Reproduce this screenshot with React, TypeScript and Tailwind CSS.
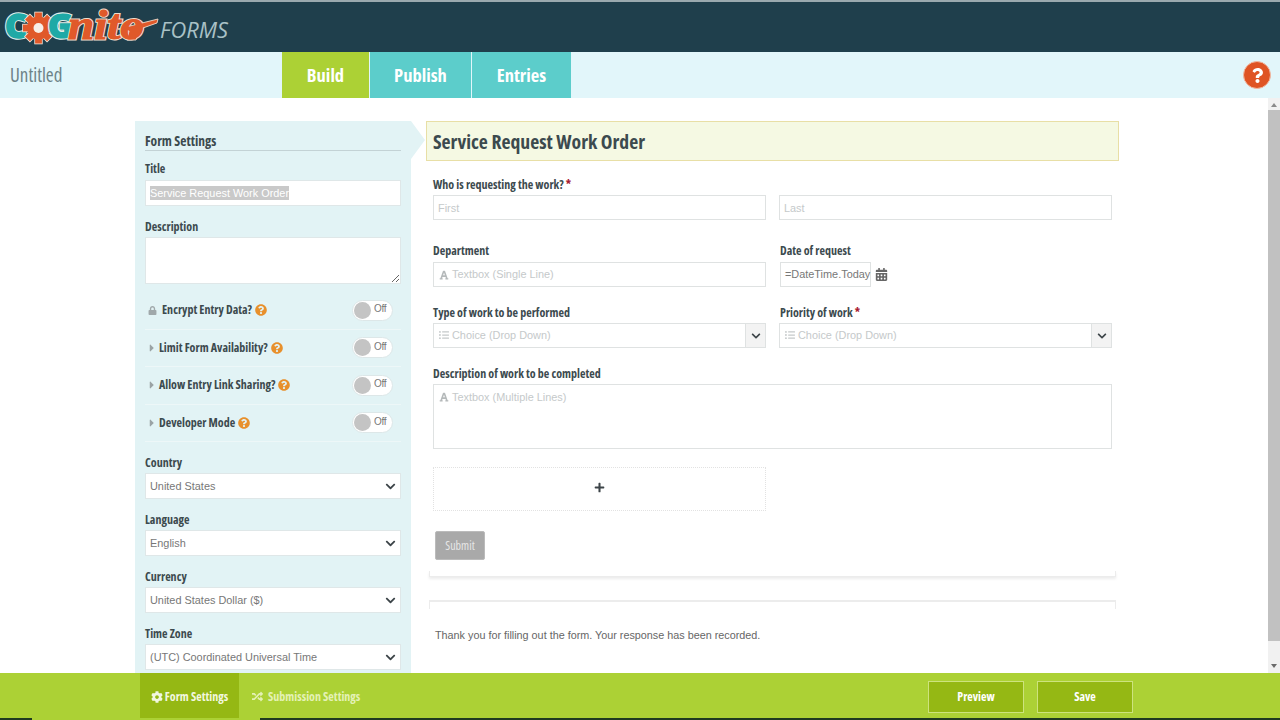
import React from "react";
import { FaCog, FaRandom, FaCalendarAlt, FaChevronDown, FaListUl, FaFont, FaPlus, FaLock, FaQuestionCircle, FaCaretRight, FaQuestion } from "react-icons/fa";

const cond = "font-['Open_Sans',sans-serif] [font-stretch:75%] font-bold";

function Logo() {
  const letter = { fontFamily: "'Open Sans',sans-serif", fontWeight: 800, fontSize: 34 };
  const nito = { fontFamily: "'Liberation Serif',serif", fontWeight: 700, fontStyle: "italic" as const, fontSize: 42 };
  return (
    <svg width="232" height="50" viewBox="0 0 232 50" className="block">
      <text x="5" y="36" {...letter} fill="#1fa9a6" stroke="#dfeeea" strokeWidth="3.4" paintOrder="stroke">C</text>
      <text x="5" y="36" {...letter} fill="#1fa9a6" stroke="#1fa9a6" strokeWidth="1.4">C</text>
      <g transform="translate(38.5 26)" stroke="#f3e6da" strokeWidth="1.6">
        {[0, 45, 90, 135].map((a) => (
          <rect key={a} x="-3.4" y="-15.5" width="6.8" height="31" fill="#e0592a" transform={`rotate(${a})`} />
        ))}
      </g>
      <g transform="translate(38.5 26)">
        {[0, 45, 90, 135].map((a) => (
          <rect key={a} x="-3.4" y="-15.5" width="6.8" height="31" fill="#e0592a" transform={`rotate(${a})`} />
        ))}
        <circle r="11.5" fill="#e0592a" />
        <circle r="5" fill="#f7efe8" />
      </g>
      <text x="48" y="36" {...letter} fill="#1fa9a6" stroke="#dfeeea" strokeWidth="3.4" paintOrder="stroke">G</text>
      <text x="48" y="36" {...letter} fill="#1fa9a6" stroke="#1fa9a6" strokeWidth="1.2">G</text>
      <text x="68" y="37" {...nito} fill="#e0592a" stroke="#efdccc" strokeWidth="3" paintOrder="stroke" textLength="76" lengthAdjust="spacingAndGlyphs">nito</text>
      <path d="M118 27 L158 17 L157 21 L140 27 L136 38 L127 38 L129 29 Z" fill="#e0592a" stroke="#efdccc" strokeWidth="0.9" />
      <text x="68" y="37" {...nito} fill="#e0592a" stroke="#e0592a" strokeWidth="1" textLength="76" lengthAdjust="spacingAndGlyphs">nito</text>
      <text x="160" y="36" fontFamily="'Open Sans',sans-serif" fontStyle="italic" fontSize="22" fill="#a9c1c6" textLength="68" lengthAdjust="spacingAndGlyphs">FORMS</text>
    </svg>
  );
}

function Help() {
  return <FaQuestionCircle className="text-[#e8902c] text-[12px] shrink-0" />;
}

function Toggle() {
  return (
    <div className="w-[41px] h-[21px] rounded-full bg-white border border-[#dde7e8] flex items-center pl-[1px] shrink-0">
      <span className="w-[17px] h-[17px] rounded-full bg-[#c4c4c4]" />
      <span className="ml-[3px] -mt-[3px] text-[10px] text-[#777] tracking-[-0.3px]">Off</span>
    </div>
  );
}

function Row({ icon, text }: { icon: React.ReactNode; text: string }) {
  return (
    <div className="h-[37.5px] flex items-center border-b border-[#edf7f8] pr-[8px]">
      {icon}
      <span className={`${cond} text-[12px] text-[#3c4a4e] mr-[3px] whitespace-nowrap`}>{text}</span>
      <Help />
      <span className="flex-1" />
      <Toggle />
    </div>
  );
}

function SideSelect({ label, value }: { label: string; value: string }) {
  return (
    <div className="mt-[11px]">
      <div className={`${cond} text-[12px] text-[#3c4a4e] h-[19px] leading-[19px]`}>{label}</div>
      <div className="h-[26px] mt-[1px] bg-white border border-[#dfe7e8] flex items-center pl-[4px] pr-[4px] text-[10.9px] text-[#777]">
        <span className="flex-1 whitespace-nowrap">{value}</span>
        <FaChevronDown className="text-[11px] text-[#3c4448]" />
      </div>
    </div>
  );
}

function Label({ children, inset }: { children: React.ReactNode; inset?: boolean }) {
  return <div className={`${cond} text-[12px] leading-[17px] text-[#3c4a4e] whitespace-nowrap ${inset ? "pl-[1px]" : ""}`}>{children}</div>;
}

const ph = "text-[10.9px] text-[#c5c9ca] whitespace-nowrap";
const box = "bg-white border border-[#dfe2e2] h-[25px] flex items-center";

function Req() {
  return <span className="text-[#a8192e]"> *</span>;
}

function Choice() {
  return (
    <div className={`${box} w-full`}>
      <span className={`${ph} flex-1 flex items-center pl-[5px]`}>
        <FaListUl className="text-[10px] mr-[3px]" />Choice (Drop Down)
      </span>
      <span className="w-[20px] h-full bg-[#f3f3f3] border-l border-[#dfe2e2] flex items-center justify-center">
        <FaChevronDown className="text-[10px] text-[#3c4448]" />
      </span>
    </div>
  );
}

export default function App() {
  return (
    <div className="w-[1280px] h-[720px] overflow-hidden flex flex-col bg-white font-['Liberation_Sans',sans-serif]">
      <header className="h-[52px] shrink-0 bg-[#1f3f4c] border-t-2 border-[#9aa9ae]">
        <Logo />
      </header>

      <nav className="h-[46px] shrink-0 bg-[#e2f6fa] flex items-stretch">
        <div className="w-[282px] pl-[10px] flex items-center">
          <span className="font-['Open_Sans',sans-serif] [font-stretch:75%] text-[19px] text-[#6d8388]">Untitled</span>
        </div>
        <div className={`${cond} w-[87px] bg-[#acd135] text-white text-[18.5px] flex items-center justify-center`}>Build</div>
        <div className={`${cond} w-[101px] ml-[1px] bg-[#5ccdcb] text-white text-[18.5px] flex items-center justify-center`}>Publish</div>
        <div className={`${cond} w-[99px] ml-[1px] bg-[#5ccdcb] text-white text-[18.5px] flex items-center justify-center`}>Entries</div>
        <div className="flex-1 flex items-center justify-end pr-[9px]">
          <span className="w-[28px] h-[28px] rounded-full bg-[#df5424] border border-[#f1b9a2] flex items-center justify-center">
            <FaQuestion className="text-white text-[15px]" />
          </span>
        </div>
      </nav>

      <main className="flex-1 min-h-0 flex">
        <div className="flex-1 min-w-0 flex pl-[135px] pt-[23px] overflow-hidden">
          <aside className="w-[276px] h-[600px] shrink-0 bg-[#e2f3f5] px-[10px] pt-[10px] relative">
            <div className={`${cond} text-[13.5px] text-[#3c4a4e] h-[20px] leading-[20px] border-b border-[#c3d2d5]`}>Form Settings</div>
            <div className="mt-[9px]"><Label>Title</Label></div>
            <div className="h-[26px] mt-[3px] bg-white border border-[#dfe7e8] flex items-center pl-[4px]">
              <span className="bg-[#c9c9c9] text-white text-[10.9px] leading-[14px] whitespace-nowrap">Service Request Work Order</span>
            </div>
            <div className="mt-[12px]"><Label>Description</Label></div>
            <textarea readOnly className="block w-full h-[47px] mt-[2px] bg-white border border-[#dfe7e8]" />
            <div className="mt-[8px]">
              <Row icon={<FaLock className="text-[9px] text-[#a0a8aa] ml-[3px] mr-[5px]" />} text="Encrypt Entry Data?" />
              <Row icon={<FaCaretRight className="text-[12px] text-[#9aa3a5] mr-[1px] ml-[1px]" />} text="Limit Form Availability?" />
              <Row icon={<FaCaretRight className="text-[12px] text-[#9aa3a5] mr-[1px] ml-[1px]" />} text="Allow Entry Link Sharing?" />
              <Row icon={<FaCaretRight className="text-[12px] text-[#9aa3a5] mr-[1px] ml-[1px]" />} text="Developer Mode" />
            </div>
            <div className="mt-[5px]">
              <SideSelect label="Country" value="United States" />
              <SideSelect label="Language" value="English" />
              <SideSelect label="Currency" value="United States Dollar ($)" />
              <SideSelect label="Time Zone" value="(UTC) Coordinated Universal Time" />
            </div>
            <span className="absolute left-full top-0 w-0 h-0 border-y-[19px] border-y-transparent border-l-[14px] border-l-[#e2f3f5]" />
          </aside>

          <section className="w-[693px] ml-[15px] shrink-0">
            <div className={`${cond} h-[40px] bg-[#f5f9e3] border border-[#e8dfa6] flex items-center pl-[6px] pt-[2px] text-[19.7px] text-[#3c4a4e]`}>Service Request Work Order</div>
            <div className="px-[7px]">
              <div className="mt-[15px]"><Label>Who is requesting the work?<Req /></Label></div>
              <div className="mt-[2px] flex gap-[13px]">
                <div className={`${box} w-[333px] pl-[4px] pt-[1px] ${ph}`}>First</div>
                <div className={`${box} w-[333px] pl-[4px] pt-[1px] ${ph}`}>Last</div>
              </div>
              <div className="mt-[22px] flex gap-[13px]">
                <div className="w-[333px]">
                  <Label>Department</Label>
                  <div className={`${box} mt-[3px] pl-[5px] ${ph}`}><FaFont className="text-[10px] mr-[3px] text-[#b5b9ba]" />Textbox (Single Line)</div>
                </div>
                <div className="w-[333px]">
                  <Label inset>Date of request</Label>
                  <div className="mt-[3px] flex items-center pl-[1px]">
                    <div className={`${box} w-[91px] pl-[4px] text-[10.9px] text-[#777] whitespace-nowrap`}>=DateTime.Today</div>
                    <FaCalendarAlt className="ml-[4px] text-[13px] text-[#666]" />
                  </div>
                </div>
              </div>
              <div className="mt-[17px] flex gap-[13px]">
                <div className="w-[333px]">
                  <Label>Type of work to be performed</Label>
                  <div className="mt-[2px]"><Choice /></div>
                </div>
                <div className="w-[333px]">
                  <Label inset>Priority of work<Req /></Label>
                  <div className="mt-[2px]"><Choice /></div>
                </div>
              </div>
              <div className="mt-[17px]"><Label>Description of work to be completed</Label></div>
              <div className={`mt-[2px] h-[65px] w-[679px] bg-white border border-[#dfe2e2] pl-[5px] pt-[4px] ${ph}`}>
                <span className="flex items-center"><FaFont className="text-[10px] mr-[3px] text-[#b5b9ba]" />Textbox (Multiple Lines)</span>
              </div>
              <div className="mt-[18px] w-[333px] h-[44px] border border-dotted border-[#e2e2e2] flex items-center justify-center pb-[4px]">
                <FaPlus className="text-[11px] text-[#3c4448]" />
              </div>
              <div className="mt-[20px] ml-[2px] w-[50px] h-[29px] bg-[#a9a9a9] rounded-[2px] border border-[#bbb] flex items-center justify-center font-['Open_Sans',sans-serif] [font-stretch:75%] text-[12px] text-[#e6e6e6]">Submit</div>
            </div>
            <div className="mt-[11px] mx-[3px] h-[6px] border-x border-b border-[#ececec] shadow-[0_2px_3px_rgba(0,0,0,0.08)]" />
            <div className="mt-[23px] mx-[3px] h-[9px] border-x border-t-2 border-[#ececec]" />
            <div className="mt-[18px] pl-[9px] text-[10.8px] text-[#666] whitespace-nowrap">Thank you for filling out the form. Your response has been recorded.</div>
          </section>
        </div>
        <div className="w-[12px] shrink-0 bg-[#f1f1f1] flex flex-col items-center">
          <span className="mt-[5px] w-0 h-0 border-x-[3px] border-x-transparent border-b-[4px] border-b-[#8a8a8a]" />
          <span className="mt-[3px] w-full h-[531px] bg-[#c1c1c1]" />
          <span className="mt-[23px] w-0 h-0 border-x-[3px] border-x-transparent border-t-[4px] border-t-[#6a6a6a]" />
        </div>
      </main>

      <footer className="h-[47px] shrink-0 flex flex-col">
        <div className="flex-1 bg-[#acd135] flex items-stretch pl-[140px]">
          <div className={`${cond} w-[99px] bg-[#95b814] text-[#f2f7df] text-[12px] flex items-center justify-center gap-[2px] pt-[2px]`}>
            <FaCog className="text-[12px]" />Form Settings
          </div>
          <div className={`${cond} ml-[13px] text-[#e4f1b6] text-[12px] flex items-center gap-[5px] pt-[2px]`}>
            <FaRandom className="text-[11px]" />Submission Settings
          </div>
          <div className="flex-1" />
          <div className={`${cond} w-[96px] mt-[8px] mb-[5px] bg-[#95b814] border border-[#cde37e] text-white text-[12px] flex items-center justify-center`}>Preview</div>
          <div className={`${cond} w-[96px] ml-[13px] mr-[147px] mt-[8px] mb-[5px] bg-[#95b814] border border-[#cde37e] text-white text-[12px] flex items-center justify-center`}>Save</div>
        </div>
        <div className="h-[2px] flex">
          <div className="w-[32px] bg-[#1f3a20]" />
          <div className="w-[228px] bg-[#acd135]" />
          <div className="flex-1 bg-[#1f3a20]" />
        </div>
      </footer>
    </div>
  );
}
